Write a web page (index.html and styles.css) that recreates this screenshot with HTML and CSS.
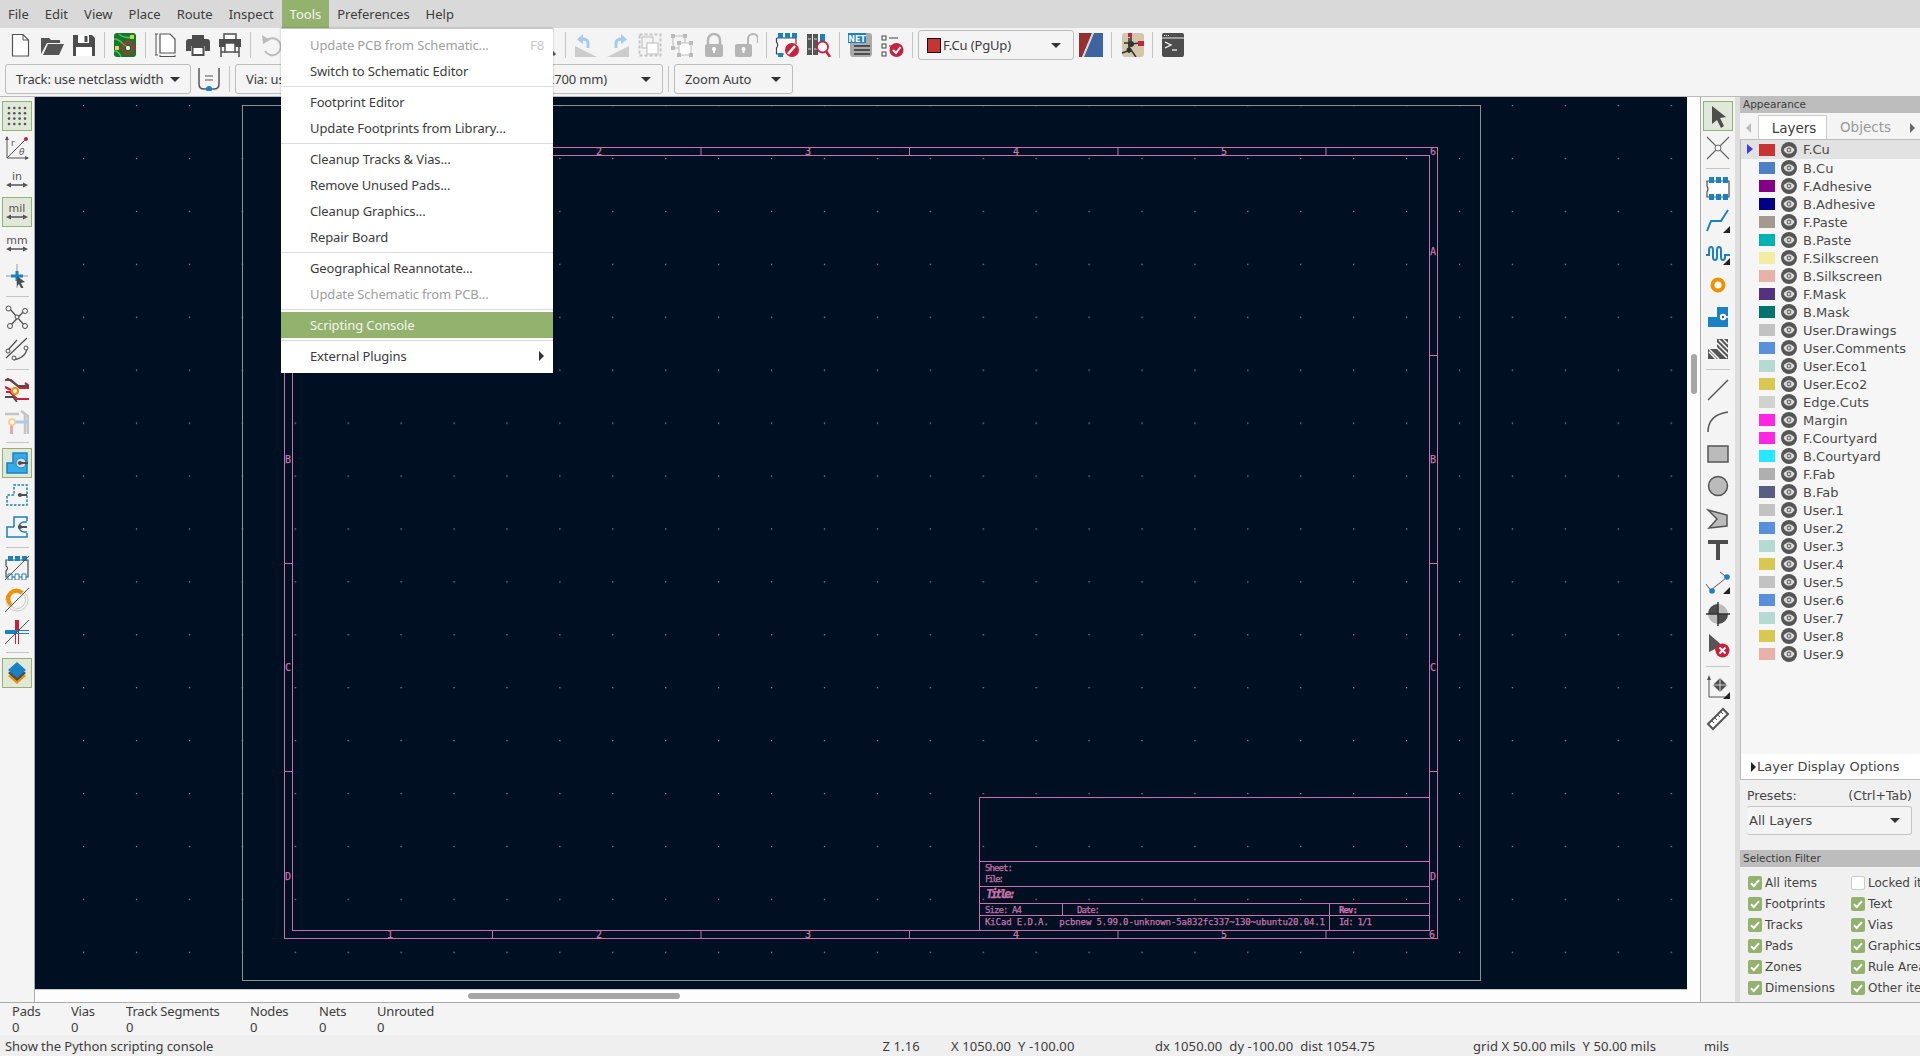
FILE: index.html
```html
<!DOCTYPE html>
<html lang="en">
<head>
<meta charset="utf-8">
<title>PCB Editor</title>
<link rel="stylesheet" href="styles.css">
</head>
<body>
<svg class="sprite" width="0" height="0">
  <symbol id="eye" viewBox="0 0 16 16"><circle cx="8" cy="8" r="8" fill="#555"/><path d="M2.5 8C4 5.3 6 4.2 8 4.2S12 5.3 13.500 8C12 10.700 10 11.800 8 11.800S4 10.700 2.500 8Z" fill="#ddd"/><circle cx="8" cy="8" r="2.400" fill="#777"/><circle cx="8" cy="8" r="1" fill="#eee"/></symbol>
  <symbol id="chk" viewBox="0 0 14 14"><path d="M3 7.300L5.800 10L11 4.200" fill="none" stroke="#fff" stroke-width="2"/></symbol>
  <symbol id="corner" viewBox="0 0 24 24"><path d="M24 17V24H17Z" fill="#222"/></symbol>
</svg>
<div class="app">
  <nav class="menubar">
    <span class="mi">File</span><span class="mi">Edit</span><span class="mi">View</span><span class="mi">Place</span><span class="mi">Route</span><span class="mi">Inspect</span><span class="mi open">Tools</span><span class="mi">Preferences</span><span class="mi">Help</span>
  </nav>

  <div class="toolbar top">
    <div class="tb"><svg viewBox="0 0 24 24"><path d="M4.500 1.500H15L20.500 7V23H4.500Z" fill="#fff" stroke="#555" stroke-width="1.200"/><path d="M15 1.500V7H20.500" fill="none" stroke="#555"/></svg></div>
    <div class="tb"><svg viewBox="0 0 24 24"><path d="M1 21V5H9L11 7H20V10H7L1 21Z" fill="#555"/><path d="M3 22L8 11H24L19 22Z" fill="#555"/></svg></div>
    <div class="tb"><svg viewBox="0 0 24 24"><path d="M1 2H20L23 5V23H1Z" fill="#4d4d4d"/><rect x="6" y="2" width="11" height="8" fill="#fff"/><rect x="12.500" y="3" width="3" height="6" fill="#4d4d4d"/><rect x="4" y="14" width="16" height="9" fill="#fff"/></svg></div>
    <i class="sep"></i>
    <div class="tb"><svg viewBox="0 0 24 24"><rect x="1" y="0" width="22" height="24" rx="3" fill="#127a2c"/><path d="M1 6C8 6 9 12 15 14M6 1C10 5 15 5 20 4M1 18C5 18 7 21 8 24" fill="none" stroke="#66b35e" stroke-width="1.300"/><rect x="17" y="2" width="4" height="4" fill="#d8c852"/><circle cx="15" cy="15" r="5.500" fill="none" stroke="#d0203a" stroke-width="3" stroke-dasharray="2.500 1"/><circle cx="15" cy="15" r="2" fill="#fff"/><rect x="2" y="13" width="4" height="4" fill="#e8d858"/></svg></div>
    <i class="sep"></i>
    <div class="tb"><svg viewBox="0 0 24 24"><path d="M6 1H16L21 6V20H6Z" fill="#fff" stroke="#555" stroke-width="1.200"/><path d="M2 1V22M1 1H4M1 22H4M6 23.500H21M6 22V24M21 22V24" fill="none" stroke="#555"/></svg></div>
    <div class="tb"><svg viewBox="0 0 24 24"><path d="M6 2H18V7H6Z" fill="#4d4d4d"/><path d="M3 6H21Q24 6 24 9V18H19V13H5V18H0V9Q0 6 3 6Z" fill="#4d4d4d"/><rect x="6.500" y="14" width="11" height="8" fill="#fff" stroke="#4d4d4d" stroke-width="2"/></svg></div>
    <div class="tb"><svg viewBox="0 0 24 24"><path d="M6 1H18V7H6Z" fill="#fff" stroke="#4d4d4d" stroke-width="1.500"/><path d="M1 6H23V14H1Z" fill="#4d4d4d"/><rect x="7" y="10" width="10" height="9" fill="#fff" stroke="#4d4d4d" stroke-width="1.500"/><path d="M3 14V24M21 14V24M3 19H7M17 19H21" fill="none" stroke="#4d4d4d" stroke-width="1.500"/></svg></div>
    <i class="sep"></i>
    <div class="tb"><svg viewBox="0 0 24 24"><path d="M8 7A8.500 8.500 0 1 1 6 18" fill="none" stroke="#bbb" stroke-width="2"/><path d="M3 2L4 11L11 7Z" fill="#bbb"/></svg></div>
    <div class="tb-gap"></div>
    <div class="tb"><svg viewBox="0 0 24 24"><circle cx="10" cy="10" r="7" fill="#fff" stroke="#555" stroke-width="2"/><path d="M15 15L22 22" stroke="#555" stroke-width="3"/></svg></div>
    <i class="sep"></i>
    <div class="tb"><svg viewBox="0 0 24 24"><path d="M1 24L23 24L1 13Z" fill="#ccc"/><path d="M14 15V10Q14 6 8 6" fill="none" stroke="#a5cdea" stroke-width="3"/><path d="M3 6.500L9 1V11Z" fill="#a5cdea"/></svg></div>
    <div class="tb"><svg viewBox="0 0 24 24"><path d="M1 24L23 24L23 13Z" fill="#ccc"/><path d="M10 15V10Q10 6 16 6" fill="none" stroke="#a5cdea" stroke-width="3"/><path d="M21 6.500L15 1V11Z" fill="#a5cdea"/></svg></div>
    <div class="tb"><svg viewBox="0 0 24 24"><rect x="1.500" y="1.500" width="21" height="21" fill="none" stroke="#c4c4c4" stroke-width="2" stroke-dasharray="3 2"/><rect x="4" y="4" width="11" height="11" fill="#f4f4f4" stroke="#bbb"/><rect x="9" y="10" width="11" height="11" fill="#fff" stroke="#bbb"/></svg></div>
    <div class="tb"><svg viewBox="0 0 24 24"><rect x="3" y="3" width="12" height="12" fill="none" stroke="#bbb"/><rect x="9" y="10" width="12" height="12" fill="#fff" stroke="#bbb"/><path d="M1 1h4v4H1zM13 1h4v4h-4zM1 13h4v4H1zM7 8h4v4H7zM19 8h4v4h-4zM7 20h4v4H7zM19 20h4v4h-4z" fill="#bbb"/></svg></div>
    <div class="tb"><svg viewBox="0 0 24 24"><path d="M6 12V7A6 6 0 0 1 18 7V12" fill="none" stroke="#b5b5b5" stroke-width="2.500"/><rect x="3" y="11" width="18" height="13" rx="2" fill="#b5b5b5"/><circle cx="12" cy="16" r="2" fill="#fff"/><rect x="11" y="16" width="2" height="4" fill="#fff"/></svg></div>
    <div class="tb"><svg viewBox="0 0 24 24"><path d="M14 11V6A5 5 0 0 1 24 6V10" fill="none" stroke="#b5b5b5" stroke-width="2"/><rect x="1" y="11" width="17" height="13" rx="2" fill="#b5b5b5"/><circle cx="9.500" cy="16" r="2" fill="#fff"/><rect x="8.500" y="16" width="2" height="4" fill="#fff"/></svg></div>
    <i class="sep"></i>
    <div class="tb"><svg viewBox="0 0 24 24"><path d="M1.500 5H21V11M1.500 5V9Q4 12 1.500 15V21H9" fill="#fff" stroke="#444" stroke-width="1.200"/><path d="M3 0h5v5H3zM10 0h5v5h-5zM17 0h5v5h-5zM3 20h5v4H3z" fill="#1a81c4"/><circle cx="17" cy="17" r="7" fill="#c8213e"/><path d="M13 21L20 13" stroke="#fff" stroke-width="2.500"/></svg></div>
    <div class="tb"><svg viewBox="0 0 24 24"><rect x="0" y="1" width="5" height="21" fill="#555"/><rect x="6" y="1" width="5" height="21" fill="#555"/><path d="M1 6H4M1 16H4M7 6H10M7 16H10" stroke="#ddd"/><rect x="13" y="1" width="5" height="8" fill="#1a81c4"/><circle cx="15.500" cy="14" r="5.500" fill="#fff" stroke="#c8213e" stroke-width="1.800"/><path d="M19 18L23 24" stroke="#c8213e" stroke-width="2.500"/></svg></div>
    <i class="sep"></i>
    <div class="tb"><svg viewBox="0 0 24 24"><rect x="2" y="0" width="22" height="24" rx="3" fill="#aaa"/><path d="M6 13H22M6 17H22M6 21H22" stroke="#4d4d4d" stroke-width="2"/><rect x="0" y="0" width="18" height="10" fill="#1a81c4"/><text class="nettxt" x="9" y="8.500">NET</text></svg></div>
    <div class="tb"><svg viewBox="0 0 24 24"><rect x="2" y="3" width="4" height="4" fill="none" stroke="#444"/><rect x="2" y="11" width="4" height="4" fill="none" stroke="#444"/><rect x="2" y="19" width="4" height="4" fill="none" stroke="#444"/><path d="M9 5H18M9 13H13" stroke="#444"/><circle cx="16.500" cy="17" r="7" fill="#c8213e"/><path d="M13 17L16 20L20.500 14" fill="none" stroke="#fff" stroke-width="2"/></svg></div>
    <i class="sep"></i>
    <div class="combo layer"><span class="swatch-big"></span><span class="combo-text">F.Cu (PgUp)</span><i class="arrow"></i></div>
    <div class="tb"><svg viewBox="0 0 24 24"><path d="M0 0H13L3 24H0Z" fill="#963030"/><path d="M15 0H24V24H5Z" fill="#3d64a0"/><path d="M14 0L4 24" stroke="#ccc"/></svg></div>
    <i class="sep"></i>
    <div class="tb"><svg viewBox="0 0 24 24"><rect x="2" y="0" width="22" height="24" rx="3" fill="#d2c7aa"/><path d="M11 9V0M11 11L20 10M11 17L2 20M9 5V20M9 10L4 10M9 14L16 24" fill="none" stroke="#333" stroke-width="1.500"/><circle cx="11" cy="11" r="3" fill="#333"/><circle cx="9" cy="17" r="2.500" fill="#333"/><rect x="18" y="8" width="6" height="5" fill="#c8213e"/><rect x="8" y="0" width="4" height="4" fill="#c8213e"/></svg></div>
    <i class="sep"></i>
    <div class="tb"><svg viewBox="0 0 24 24"><rect x="1" y="0" width="22" height="24" rx="2" fill="#4d4d4d"/><path d="M1 5H23" stroke="#eee"/><path d="M3 2.500H9" stroke="#eee" stroke-dasharray="1 1"/><path d="M4 9L10 12L4 15" fill="none" stroke="#fff" stroke-width="1.200"/><path d="M11 17H16" stroke="#fff" stroke-width="1.200"/></svg></div>
  </div>

  <div class="toolbar aux">
    <div class="combo track"><span class="combo-text">Track: use netclass width</span><i class="arrow"></i></div>
    <div class="tb wire"><svg viewBox="0 0 24 24"><path d="M2 1V17Q2 22 7 22H17Q22 22 22 17V1" fill="none" stroke="#555" stroke-width="1.500"/><path d="M8 9H16M8 13H16" stroke="#555"/><circle cx="12" cy="22" r="3" fill="#1a81c4"/></svg></div>
    <i class="sep"></i>
    <div class="combo via"><span class="combo-text">Via: use netclass sizes</span><i class="arrow"></i></div>
    <div class="combo grid-c"><span class="combo-text">Grid: 50.0000 mils (1.2700 mm)</span><i class="arrow"></i></div>
    <i class="sep wide"></i>
    <div class="combo zoom-c"><span class="combo-text">Zoom Auto</span><i class="arrow"></i></div>
  </div>

  <div class="main">
    <div class="vtool left">
      <div class="tb on"><svg viewBox="0 0 24 24"><g fill="#555"><circle cx="4" cy="4" r="1.300"/><circle cx="9.300" cy="4" r="1.300"/><circle cx="14.600" cy="4" r="1.300"/><circle cx="20" cy="4" r="1.300"/><circle cx="4" cy="9.300" r="1.300"/><circle cx="9.300" cy="9.300" r="1.300"/><circle cx="14.600" cy="9.300" r="1.300"/><circle cx="20" cy="9.300" r="1.300"/><circle cx="4" cy="14.600" r="1.300"/><circle cx="9.300" cy="14.600" r="1.300"/><circle cx="14.600" cy="14.600" r="1.300"/><circle cx="20" cy="14.600" r="1.300"/><circle cx="4" cy="20" r="1.300"/><circle cx="9.300" cy="20" r="1.300"/><circle cx="14.600" cy="20" r="1.300"/><circle cx="20" cy="20" r="1.300"/></g></svg></div>
      <div class="tb"><svg viewBox="0 0 24 24"><path d="M2 1V22H23M2 22L21 3" fill="none" stroke="#555"/><path d="M0 4L2 0L4 4ZM20 20L24 22L20 24Z" fill="#555"/><circle cx="21" cy="3" r="2" fill="#c8213e"/><text class="polar" x="6" y="10">r</text><text class="polar it" x="14" y="19">θ</text></svg></div>
      <div class="tb"><svg viewBox="0 0 24 24"><text class="unit" x="12" y="12">in</text><path d="M4 17H20" stroke="#555" stroke-width="1.500"/><path d="M1 17L6 14.500V19.500ZM23 17L18 14.500V19.500Z" fill="#555"/></svg></div>
      <div class="tb on"><svg viewBox="0 0 24 24"><text class="unit" x="12" y="12">mil</text><path d="M4 17H20" stroke="#555" stroke-width="1.500"/><path d="M1 17L6 14.500V19.500ZM23 17L18 14.500V19.500Z" fill="#555"/></svg></div>
      <div class="tb"><svg viewBox="0 0 24 24"><text class="unit" x="12" y="12">mm</text><path d="M4 17H20" stroke="#555" stroke-width="1.500"/><path d="M1 17L6 14.500V19.500ZM23 17L18 14.500V19.500Z" fill="#555"/></svg></div>
      <div class="tb"><svg viewBox="0 0 24 24"><path d="M12 0V7M12 17V24M1 12H7M17 12H23" stroke="#999"/><path d="M6 12H18M12 7V17" stroke="#1a81c4" stroke-width="3"/><path d="M12 12L20 18L16 19L18.500 24L16 24L14 20L12 22Z" fill="#4d4d4d"/></svg></div>
      <i class="sep h"></i>
      <div class="tb"><svg viewBox="0 0 24 24"><path d="M4 3L20 21M20 5L5 21" stroke="#4d4d4d" stroke-width="1.200"/><g fill="#f4f4f4" stroke="#4d4d4d"><circle cx="3.500" cy="3.500" r="2.500"/><circle cx="20" cy="6" r="2.500"/><circle cx="12" cy="12" r="2"/><circle cx="5" cy="21" r="2.500"/><circle cx="20" cy="21" r="2.500"/></g></svg></div>
      <div class="tb"><svg viewBox="0 0 24 24"><path d="M1 21L22 1M3 13L12 3M9 23Q22 20 22 10" fill="none" stroke="#4d4d4d" stroke-width="1.200"/><g fill="#f4f4f4" stroke="#4d4d4d"><circle cx="3" cy="14" r="2"/><circle cx="9" cy="21" r="2"/><circle cx="21" cy="11" r="2"/></g></svg></div>
      <i class="sep h"></i>
      <div class="tb"><svg viewBox="0 0 24 24"><path d="M0 2L6 2L15 10H24M1 14L5 14L12 21H24M0 9L6 12M20 5L24 8" fill="none" stroke="#c8213e" stroke-width="2.200"/><path d="M0 19H8L12 24M2 0L13 8H24" fill="none" stroke="#4d4d4d" stroke-width="1.800"/><circle cx="10" cy="13" r="3" fill="#fff" stroke="#f29100" stroke-width="2"/></svg></div>
      <div class="tb"><svg viewBox="0 0 24 24"><path d="M0 4H14M16 1L23 6V24M20 3V24" fill="none" stroke="#c4c4c4" stroke-width="2.500"/><rect x="5" y="12" width="3" height="12" fill="#e9a5b0"/><path d="M10 12H24" stroke="#a5cdea" stroke-width="3"/><circle cx="7" cy="12" r="3" fill="#fff" stroke="#fbcf93" stroke-width="2"/></svg></div>
      <i class="sep h"></i>
      <div class="tb on"><svg viewBox="0 0 24 24"><path d="M8 12H2V22H22V2H8Z" fill="#35abe8" stroke="#1a81c4" stroke-width="1.500"/><circle cx="16" cy="12" r="5" fill="#ddd" stroke="#1a81c4"/><path d="M13 12H23" stroke="#4d4d4d" stroke-width="2"/><circle cx="15" cy="12" r="2" fill="#4d4d4d"/></svg></div>
      <div class="tb"><svg viewBox="0 0 24 24"><path d="M9 12H2V22H22V2H9Z" fill="none" stroke="#1a81c4" stroke-width="1.500" stroke-dasharray="2.500 1.500"/><path d="M13 12H22" stroke="#4d4d4d" stroke-width="2"/><circle cx="15" cy="12" r="2" fill="#4d4d4d"/></svg></div>
      <div class="tb"><svg viewBox="0 0 24 24"><path d="M9 12H2V22H22V18M22 6V2H9V12" fill="none" stroke="#1a81c4" stroke-width="1.500"/><path d="M22 7H19A5 5 0 0 0 19 17H22" fill="none" stroke="#1a81c4" stroke-width="1.500"/><path d="M13 12H22" stroke="#4d4d4d" stroke-width="2"/><circle cx="15" cy="12" r="2" fill="#4d4d4d"/></svg></div>
      <i class="sep h"></i>
      <div class="tb"><svg viewBox="0 0 24 24"><path d="M1 4H23V21H1V15Q4 12 1 10Z" fill="none" stroke="#4d4d4d" stroke-width="1.200"/><path d="M3 0h5v5H3zM10 0h5v5h-5zM17 0h5v5h-5z" fill="#1a81c4"/><path d="M3 18h4v6H3zM10 18h4v6h-4zM17 18h4v6h-4z" fill="#fff" stroke="#1a81c4"/><path d="M0 24L24 0" stroke="#4d4d4d"/></svg></div>
      <div class="tb"><svg viewBox="0 0 24 24"><circle cx="12" cy="12" r="11" fill="none" stroke="#ccc"/><circle cx="12" cy="12" r="8.500" fill="none" stroke="#ccc"/><path d="M12 1A11 11 0 0 0 1 12" fill="none" stroke="#f29100"/><path d="M6 17A8 8 0 0 1 17 5" fill="none" stroke="#f29100" stroke-width="4"/><path d="M0 24L24 0" stroke="#4d4d4d"/></svg></div>
      <div class="tb"><svg viewBox="0 0 24 24"><rect x="10" y="0" width="4" height="12" fill="#c8213e"/><path d="M10.500 12V24M13.500 12V24" stroke="#c8213e"/><path d="M0 12H12" stroke="#1a81c4" stroke-width="4"/><path d="M12 10.500H24M12 13.500H24" stroke="#1a81c4"/><path d="M0 24L24 0" stroke="#4d4d4d"/></svg></div>
      <i class="sep h"></i>
      <div class="tb on"><svg viewBox="0 0 24 24"><path d="M3 15L12 8L21 15L12 23Z" fill="#f29100"/><path d="M3 12L12 5L21 12L12 20Z" fill="#4d4d4d"/><path d="M3 9L12 1L21 9L12 17Z" fill="#1a81c4"/></svg></div>
    </div>

    <div class="canvas-col">
      <svg class="canvas" viewBox="35 97 1652 892">
        <defs><pattern id="dots" x="83" y="105" width="52.920" height="52.920" patternUnits="userSpaceOnUse"><rect width="1.200" height="1.200" fill="#9a9da0"/></pattern></defs>
        <rect class="cbg" x="35" y="97" width="1652" height="892"/>
        <rect x="35" y="97" width="1652" height="892" fill="url(#dots)"/>
        <rect class="gframe" x="242.500" y="105.500" width="1238" height="875"/>
        <g class="ws">
          <rect x="284.500" y="147.500" width="1153" height="791"/>
          <rect x="292.500" y="155.500" width="1137" height="775"/>
          <path d="M492.500 147V155M701 147V155M909.500 147V155M1118 147V155M1326 147V155M492.500 931V938M701 931V938M909.500 931V938M1118 931V938M1326 931V938M285 355.500H292M285 563.500H292M285 771.500H292M1430 355.500H1437M1430 563.500H1437M1430 771.500H1437"/>
          <path d="M979.500 797.500H1429M979.500 797.500V930M979.500 861.500H1429M979.500 886.500H1429M979.500 903.500H1429M979.500 915.500H1429M1062.500 903.500V915.500M1329.500 903.500V930"/>
        </g>
        <g class="wt">
          <text x="599" y="155">2</text><text x="808" y="155">3</text><text x="1016" y="155">4</text><text x="1224" y="155">5</text><text x="1433" y="155">6</text>
          <text x="390" y="938">1</text><text x="599" y="938">2</text><text x="808" y="938">3</text><text x="1016" y="938">4</text><text x="1224" y="938">5</text><text x="1432" y="938">6</text>
          <text x="288" y="463">B</text><text x="288" y="671">C</text><text x="288" y="880">D</text>
          <text x="1433" y="255">A</text><text x="1433" y="463">B</text><text x="1433" y="671">C</text><text x="1433" y="880">D</text>
        </g>
        <g class="wl">
          <text x="985" y="871" textLength="28">Sheet:</text>
          <text x="985" y="882" textLength="19">File:</text>
          <text class="wtitle" x="986" y="898" textLength="30">Title:</text>
          <text x="985" y="913" textLength="37">Size: A4</text>
          <text x="1077" y="913" textLength="23">Date:</text>
          <text class="wrev" x="1339" y="913" textLength="19">Rev:</text>
          <text x="985" y="925" textLength="340">KiCad E.D.A.  pcbnew 5.99.0-unknown-5a832fc337~130~ubuntu20.04.1</text>
          <text x="1339" y="925" textLength="33">Id: 1/1</text>
        </g>
      </svg>
      <div class="hscroll"><i class="hthumb"></i></div>
    </div>
    <div class="vscroll"><i class="vthumb"></i></div>

    <div class="vtool right">
      <div class="tb on"><svg viewBox="0 0 24 24"><path d="M6 2L20 13L14 14L18 22L15 24L11 16L6 20Z" fill="#4d4d4d"/></svg></div>
      <div class="tb"><svg viewBox="0 0 24 24"><path d="M1 1L23 23M23 1L1 23" stroke="#666" stroke-width="1.200"/><circle cx="12" cy="12" r="3" fill="#f4f4f4" stroke="#666"/></svg></div>
      <i class="sep h"></i>
      <div class="tb"><svg viewBox="0 0 24 24"><path d="M1 4H23V20H1V15Q3 12 1 9Z" fill="#fff" stroke="#4d4d4d" stroke-width="1.200"/><path d="M3 0h5v6H3zM10 0h5v6h-5zM17 0h5v6h-5zM3 17h5v6H3zM10 17h5v6h-5zM17 17h5v6h-5z" fill="#1a81c4"/></svg></div>
      <div class="tb"><svg viewBox="0 0 24 24"><path d="M1 22L5 12H15L22 1" fill="none" stroke="#1a81c4" stroke-width="2"/><use href="#corner"/></svg></div>
      <div class="tb"><svg viewBox="0 0 24 24"><path d="M0 14H3V9Q3 6 5 6T7 9V16Q7 19 9 19T11 16V9Q11 6 13 6T15 9V16Q15 19 17 19T19 16V14H24" fill="none" stroke="#1a81c4" stroke-width="2"/><use href="#corner"/></svg></div>
      <div class="tb"><svg viewBox="0 0 24 24"><circle cx="12" cy="12" r="5.500" fill="#fff" stroke="#f29100" stroke-width="4"/></svg></div>
      <div class="tb"><svg viewBox="0 0 24 24"><path d="M11 2H22V22H2V12H11Z" fill="#1a81c4"/><circle cx="17" cy="12" r="3.200" fill="#fff"/><path d="M17 12H22" stroke="#fff" stroke-width="1.500"/><circle cx="17" cy="12" r="1.200" fill="#555"/></svg></div>
      <div class="tb"><svg viewBox="0 0 24 24"><path d="M11 2H22V22H2V12H11Z" fill="#555"/><path d="M3 15L10 22M3 12L13 22M10 10L21 21M11 6L22 17M13 3L22 12M17 2L22 7" stroke="#fff" stroke-width="1.500"/></svg></div>
      <i class="sep h"></i>
      <div class="tb"><svg viewBox="0 0 24 24"><path d="M2 22L22 2" stroke="#555" stroke-width="1.500"/></svg></div>
      <div class="tb"><svg viewBox="0 0 24 24"><path d="M2 22Q2 5 22 2" fill="none" stroke="#555" stroke-width="1.500"/></svg></div>
      <div class="tb"><svg viewBox="0 0 24 24"><rect x="2" y="4" width="20" height="16" fill="#bbb" stroke="#555" stroke-width="1.500"/></svg></div>
      <div class="tb"><svg viewBox="0 0 24 24"><circle cx="12" cy="12" r="9.500" fill="#bbb" stroke="#555" stroke-width="1.500"/></svg></div>
      <div class="tb"><svg viewBox="0 0 24 24"><path d="M2 4L21 9L21 20L3 22L11 13Z" fill="#bbb" stroke="#555" stroke-width="1.500"/></svg></div>
      <div class="tb"><svg viewBox="0 0 24 24"><path d="M2 2H22V6H14V22H10V6H2Z" fill="#4d4d4d"/></svg></div>
      <div class="tb"><svg viewBox="0 0 24 24"><path d="M5 20L20 8" stroke="#555"/><path d="M14 2L23 9M0 14L6 22" stroke="#555"/><circle cx="21" cy="7" r="2.800" fill="#1a81c4"/><circle cx="6" cy="21" r="2.800" fill="#1a81c4"/><use href="#corner"/></svg></div>
      <div class="tb"><svg viewBox="0 0 24 24"><circle cx="12" cy="12" r="10" fill="#bbb"/><path d="M12 2A10 10 0 0 0 2 12H12ZM12 22A10 10 0 0 0 22 12H12Z" fill="#4d4d4d"/><path d="M12 0V24M0 12H24" stroke="#333" stroke-width="1.500"/></svg></div>
      <div class="tb"><svg viewBox="0 0 24 24"><path d="M3 0L18 13L12 14L15 20L12 22L9 15L3 18Z" fill="#555"/><circle cx="16.500" cy="16.500" r="7" fill="#c8213e"/><path d="M13.500 13.500L19.500 19.500M19.500 13.500L13.500 19.500" stroke="#fff" stroke-width="2"/></svg></div>
      <i class="sep h"></i>
      <div class="tb"><svg viewBox="0 0 24 24"><path d="M3 2V22H23" fill="none" stroke="#555"/><path d="M1 5L3 0L5 5Z" fill="#555"/><path d="M14 3L21 10L14 17L7 10Z" fill="#4d4d4d"/><path d="M14 2V18M6 10H22" stroke="#f4f4f4" stroke-width=".800"/><use href="#corner"/></svg></div>
      <div class="tb"><svg viewBox="0 0 24 24"><path d="M2 17L17 2L22 7L7 22Z" fill="#fff" stroke="#555" stroke-width="2"/><path d="M6 14L8 16M9 11L11 13M12 8L14 10M15 5L17 7" stroke="#555"/></svg></div>
    </div>
    <div class="sash"></div>

    <aside class="panel">
      <div class="phead">Appearance</div>
      <div class="tabs">
        <i class="tarrow l"></i>
        <span class="tab active">Layers</span>
        <span class="tab">Objects</span>
        <i class="tarrow r"></i>
      </div>
      <div class="layers">
        <ul class="llist">
          <li class="sel"><i class="cur"></i><i class="sw s1"></i><svg class="eye"><use href="#eye"/></svg>F.Cu</li>
          <li><i class="sw s2"></i><svg class="eye"><use href="#eye"/></svg>B.Cu</li>
          <li><i class="sw s3"></i><svg class="eye"><use href="#eye"/></svg>F.Adhesive</li>
          <li><i class="sw s4"></i><svg class="eye"><use href="#eye"/></svg>B.Adhesive</li>
          <li><i class="sw s5"></i><svg class="eye"><use href="#eye"/></svg>F.Paste</li>
          <li><i class="sw s6"></i><svg class="eye"><use href="#eye"/></svg>B.Paste</li>
          <li><i class="sw s7"></i><svg class="eye"><use href="#eye"/></svg>F.Silkscreen</li>
          <li><i class="sw s8"></i><svg class="eye"><use href="#eye"/></svg>B.Silkscreen</li>
          <li><i class="sw s9"></i><svg class="eye"><use href="#eye"/></svg>F.Mask</li>
          <li><i class="sw s10"></i><svg class="eye"><use href="#eye"/></svg>B.Mask</li>
          <li><i class="sw s11"></i><svg class="eye"><use href="#eye"/></svg>User.Drawings</li>
          <li><i class="sw s12"></i><svg class="eye"><use href="#eye"/></svg>User.Comments</li>
          <li><i class="sw s13"></i><svg class="eye"><use href="#eye"/></svg>User.Eco1</li>
          <li><i class="sw s14"></i><svg class="eye"><use href="#eye"/></svg>User.Eco2</li>
          <li><i class="sw s15"></i><svg class="eye"><use href="#eye"/></svg>Edge.Cuts</li>
          <li><i class="sw s16"></i><svg class="eye"><use href="#eye"/></svg>Margin</li>
          <li><i class="sw s16"></i><svg class="eye"><use href="#eye"/></svg>F.Courtyard</li>
          <li><i class="sw s17"></i><svg class="eye"><use href="#eye"/></svg>B.Courtyard</li>
          <li><i class="sw s18"></i><svg class="eye"><use href="#eye"/></svg>F.Fab</li>
          <li><i class="sw s19"></i><svg class="eye"><use href="#eye"/></svg>B.Fab</li>
          <li><i class="sw s11"></i><svg class="eye"><use href="#eye"/></svg>User.1</li>
          <li><i class="sw s12"></i><svg class="eye"><use href="#eye"/></svg>User.2</li>
          <li><i class="sw s13"></i><svg class="eye"><use href="#eye"/></svg>User.3</li>
          <li><i class="sw s14"></i><svg class="eye"><use href="#eye"/></svg>User.4</li>
          <li><i class="sw s11"></i><svg class="eye"><use href="#eye"/></svg>User.5</li>
          <li><i class="sw s12"></i><svg class="eye"><use href="#eye"/></svg>User.6</li>
          <li><i class="sw s13"></i><svg class="eye"><use href="#eye"/></svg>User.7</li>
          <li><i class="sw s14"></i><svg class="eye"><use href="#eye"/></svg>User.8</li>
          <li><i class="sw s8"></i><svg class="eye"><use href="#eye"/></svg>User.9</li>
        </ul>
        <div class="ldo"><i class="tri"></i>Layer Display Options</div>
      </div>
      <div class="presets">
        <div class="prow"><span>Presets:</span><span>(Ctrl+Tab)</span></div>
        <div class="pcombo"><span>All Layers</span><i class="arrow"></i></div>
      </div>
      <div class="phead filter">Selection Filter</div>
      <div class="fgrid">
        <label class="f"><svg class="cb"><use href="#chk"/></svg>All items</label>
        <label class="f"><i class="cb off"></i>Locked items</label>
        <label class="f"><svg class="cb"><use href="#chk"/></svg>Footprints</label>
        <label class="f"><svg class="cb"><use href="#chk"/></svg>Text</label>
        <label class="f"><svg class="cb"><use href="#chk"/></svg>Tracks</label>
        <label class="f"><svg class="cb"><use href="#chk"/></svg>Vias</label>
        <label class="f"><svg class="cb"><use href="#chk"/></svg>Pads</label>
        <label class="f"><svg class="cb"><use href="#chk"/></svg>Graphics</label>
        <label class="f"><svg class="cb"><use href="#chk"/></svg>Zones</label>
        <label class="f"><svg class="cb"><use href="#chk"/></svg>Rule Areas</label>
        <label class="f"><svg class="cb"><use href="#chk"/></svg>Dimensions</label>
        <label class="f"><svg class="cb"><use href="#chk"/></svg>Other items</label>
      </div>
    </aside>
  </div>

  <div class="msgpanel">
    <span>Pads</span><span>0</span><span>Vias</span><span>0</span><span>Track Segments</span><span>0</span><span>Nodes</span><span>0</span><span>Nets</span><span>0</span><span>Unrouted</span><span>0</span>
  </div>
  <div class="status">
    <span>Show the Python scripting console</span><span class="num">Z 1.16</span><span class="num">X 1050.00  Y -100.00</span><span class="num">dx 1050.00  dy -100.00  dist 1054.75</span><span class="num">grid X 50.00 mils  Y 50.00 mils</span><span>mils</span>
  </div>

  <div class="menu">
    <div class="item dis"><span>Update PCB from Schematic...</span><span class="key">F8</span></div>
    <div class="item">Switch to Schematic Editor</div>
    <hr>
    <div class="item">Footprint Editor</div>
    <div class="item">Update Footprints from Library...</div>
    <hr>
    <div class="item">Cleanup Tracks &amp; Vias...</div>
    <div class="item">Remove Unused Pads...</div>
    <div class="item">Cleanup Graphics...</div>
    <div class="item">Repair Board</div>
    <hr>
    <div class="item">Geographical Reannotate...</div>
    <div class="item dis">Update Schematic from PCB...</div>
    <hr>
    <div class="item hi">Scripting Console</div>
    <hr>
    <div class="item"><span>External Plugins</span><i class="sub"></i></div>
  </div>
</div>
</body>
</html>
```
FILE: styles.css
```css
* { box-sizing: border-box; }
html, body { margin: 0; padding: 0; }
body { width: 1920px; height: 1056px; overflow: hidden; background: #f4f4f4; color: #3c3c3c; font-family: "Noto Sans", "Open Sans", sans-serif; font-size: 13px; }
i { display: block; font-style: normal; }
.sprite { position: absolute; }
.app { position: relative; width: 1920px; height: 1056px; display: flex; flex-direction: column; }

/* menu bar */
.menubar { height: 28px; background: #d9d9d9; display: flex; flex: none; }
.mi { padding: 0 8px; line-height: 28px; }
.mi.open { background: #93b26e; color: #f4f6ee; }

/* toolbars */
.toolbar { display: flex; align-items: center; flex: none; background: #f4f4f4; }
.toolbar.top { height: 34px; padding-left: 4px; }
.toolbar.aux { height: 35px; padding-left: 5px; border-bottom: 1px solid #bbb; }
.tb { width: 32px; height: 32px; display: flex; align-items: center; justify-content: center; flex: none; }
.tb svg { width: 24px; height: 24px; display: block; }
.tb-gap { width: 242px; flex: none; }
.tb.wire { margin-left: 2px; }
.sep { width: 9px; height: 26px; flex: none; position: relative; }
.sep::after { content: ""; position: absolute; left: 4px; top: 0; bottom: 0; width: 1px; background: #c4c4c4; }
.sep.wide { margin: 0 1px; }
.sep.h { width: 32px; height: 9px; }
.sep.h::after { left: 4px; right: 4px; top: 4px; bottom: auto; width: auto; height: 1px; }

.combo { height: 30px; border: 1px solid #bcbcbc; border-radius: 3px; display: flex; align-items: center; justify-content: space-between; flex: none; background: #f4f4f4; padding: 0 10px 0 10px; letter-spacing: -0.15px; white-space: nowrap; overflow: hidden; }
.arrow { width: 0; height: 0; border-left: 5px solid transparent; border-right: 5px solid transparent; border-top: 5px solid #333; flex: none; }
.combo.track { width: 186px; }
.combo.via { width: 145px; margin-left: 1px; }
.combo.grid-c { width: 279px; margin-left: 4px; justify-content: flex-end; gap: 34px; padding-right: 11px; }
.combo.zoom-c { width: 119px; padding-right: 11px; }
.combo.layer { width: 156px; margin: 0 1px; padding-left: 8px; padding-right: 12px; justify-content: flex-start; }
.layer .arrow { margin-left: auto; }
.swatch-big { width: 14px; height: 15px; background: #c83434; border: 1px solid #111; margin-right: 2px; flex: none; }

.nettxt { font: bold 8px "DejaVu Sans", sans-serif; fill: #fff; text-anchor: middle; }
.polar { font: 9px "DejaVu Sans", sans-serif; fill: #555; }
.polar.it { font-style: italic; }
.unit { font: 11px "DejaVu Sans", sans-serif; fill: #555; text-anchor: middle; }

/* main */
.main { flex: 1; display: flex; min-height: 0; }
.vtool { width: 35px; flex: none; background: #f4f4f4; display: flex; flex-direction: column; padding: 3px 0 0 1px; border-right: 1px solid #aaa; }
.vtool .tb.on { width: 30px; height: 30px; margin: 1px; background: #e1e8d9; border: 1px solid #93b26e; }
.vtool.left { align-items: flex-start; }
.vtool.left .sep.h { width: 33px; }
.vtool.left .sep.h::after { left: 5px; right: 5px; }
.vtool.right { border-right: 0; border-left: 1px solid #aaa; width: 35px; }
.canvas-col { width: 1652px; flex: none; display: flex; flex-direction: column; }
.canvas { width: 1652px; height: 892px; display: block; flex: none; }
.cbg { fill: #001023; }
.gframe { fill: none; stroke: #8c9093; stroke-width: 1; }
.ws rect, .ws path { fill: none; stroke: #c872ab; stroke-width: 1; }
.wt text, .wl text { fill: #c872ab; stroke: #c872ab; stroke-width: .25px; font-family: "DejaVu Sans Mono", monospace; font-size: 9px; white-space: pre; }
.wt text { text-anchor: middle; font-size: 10px; }
.wtitle { font-size: 12px !important; font-weight: bold; font-style: italic; }
.wrev { font-weight: bold; }
.hscroll { flex: 1; background: #fdfdfd; border-top: 1px solid #ccc; position: relative; }
.hthumb { position: absolute; left: 433px; top: 3px; width: 212px; height: 6px; border-radius: 3px; background: #a6a6a6; }
.vscroll { width: 13px; flex: none; background: #fdfdfd; position: relative; }
.vthumb { position: absolute; left: 4px; top: 257px; width: 6px; height: 40px; border-radius: 3px; background: #a6a6a6; }
.sash { width: 5px; flex: none; background: #dedede; }

/* right panel */
.panel { width: 180px; flex: none; margin-top: -1px; background: #f0f0f0; font-family: "DejaVu Sans", sans-serif; font-size: 13px; color: #444; display: flex; flex-direction: column; overflow: hidden; }
.phead { height: 17px; background: #bdbdbd; font-size: 10.5px; line-height: 17px; padding-left: 3px; flex: none; color: #3c3c3c; }
.tabs { height: 27px; flex: none; display: flex; align-items: flex-end; position: relative; background: #f4f4f4; padding-left: 18px; }
.tab { height: 25px; line-height: 24px; width: 69px; text-align: center; font-size: 13.5px; color: #999; margin-right: 4px; }
.tab.active { background: #fff; color: #3c3c3c; border: 1px solid #ccc; border-bottom: 0; padding-left: 3px; }
.tarrow { position: absolute; top: 10px; width: 0; height: 0; border-top: 5px solid transparent; border-bottom: 5px solid transparent; }
.tarrow.l { left: 6px; border-right: 5px solid #bbb; }
.tarrow.r { right: 5px; border-left: 5px solid #666; }
.layers { height: 641px; flex: none; border: 1px solid #bbb; border-right: 0; background: #f6f6f6; display: flex; flex-direction: column; margin-top: -1px; position: relative; }
.llist { list-style: none; margin: 0; padding: 0; flex: 1; }
.llist li { height: 18px; display: flex; align-items: center; position: relative; padding-left: 18px; white-space: nowrap; color: #4a4a4a; }
.llist li.sel { background: #e2e2e2; height: 19px; }
.cur { position: absolute; left: 6px; top: 4px; width: 0; height: 0; border-top: 5px solid transparent; border-bottom: 5px solid transparent; border-left: 6px solid #3a3af0; }
.sw { width: 16px; height: 12px; flex: none; margin-right: 6px; }
.eye { width: 16px; height: 16px; flex: none; margin-right: 6px; }
.s1 { background: #c83434; } .s2 { background: #4d7fc4; } .s3 { background: #840084; } .s4 { background: #000084; }
.s5 { background: #a39991; } .s6 { background: #00b2b2; } .s7 { background: #f2eda1; } .s8 { background: #e8b2a7; }
.s9 { background: #54327d; } .s10 { background: #027373; } .s11 { background: #c2c2c2; } .s12 { background: #5990dc; }
.s13 { background: #b4dbd2; } .s14 { background: #d8c852; } .s15 { background: #d0d2cd; } .s16 { background: #ff26e2; }
.s17 { background: #26e9ff; } .s18 { background: #afafaf; } .s19 { background: #585d84; }
.ldo { height: 25px; background: #fff; flex: none; display: flex; align-items: center; padding-left: 10px; }
.tri { width: 0; height: 0; border-top: 5px solid transparent; border-bottom: 5px solid transparent; border-left: 5px solid #222; margin-right: 1px; }
.presets { height: 65px; flex: none; padding: 4px 8px 0 7px; font-size: 12.5px; background: #f0f0f0; }
.prow { display: flex; justify-content: space-between; height: 22px; align-items: center; }
.pcombo { height: 29px; border: 1px solid #c4c4c4; border-left: 0; border-radius: 3px; background: #f4f4f4; display: flex; align-items: center; justify-content: space-between; padding: 0 11px 0 2px; font-size: 13px; }
.phead.filter { margin-top: 5px; }
.fgrid { display: grid; grid-template-columns: 103px 103px; grid-auto-rows: 21px; padding: 5px 0 0 8px; font-size: 12px; flex: 1; }
.f { display: flex; align-items: center; white-space: nowrap; color: #444; }
.cb { width: 14px; height: 14px; flex: none; margin-right: 3px; background: #93b26e; border-radius: 2px; display: block; }
.cb.off { background: #fff; border: 1px solid #ccc; }

/* message panel + status */
.msgpanel { height: 33px; flex: none; border-top: 1px solid #aaa; background: #f4f4f4; display: grid; grid-template-columns: 59px 55px 124px 69px 58px auto; grid-template-rows: 16px 16px; grid-auto-flow: column; padding-left: 12px; font-size: 13px; align-items: center; letter-spacing: -0.2px; }
.status { height: 21px; flex: none; background: #efefef; display: grid; grid-template-columns: 877.500px 68.500px 204px 318px 231px auto; padding: 1px 0 0 5px; font-size: 13px; align-items: center; letter-spacing: -0.05px; white-space: pre; }
.num { letter-spacing: 0.1px; }

/* dropdown */
.menu { position: absolute; left: 281px; top: 28px; width: 272px; height: 345px; background: #fff; padding: 4px 0; border-top: 1px solid #c4c4c4; box-shadow: 0 0 2px rgba(0,0,0,.25); }
.item { height: 26px; display: flex; align-items: center; justify-content: space-between; padding: 0 9px 0 29px; letter-spacing: -0.12px; }
.menu .item:first-child { margin-top: -1px; }
.item.dis { color: #a0a0a0; }
.item.hi { background: #93b26e; color: #f4f6ee; }
.key { color: #c8c8c8; }
.menu hr { margin: 2px 0; height: 1px; border: 0; background: #dcdcdc; }
.sub { width: 0; height: 0; border-top: 5px solid transparent; border-bottom: 5px solid transparent; border-left: 5px solid #333; }
```
